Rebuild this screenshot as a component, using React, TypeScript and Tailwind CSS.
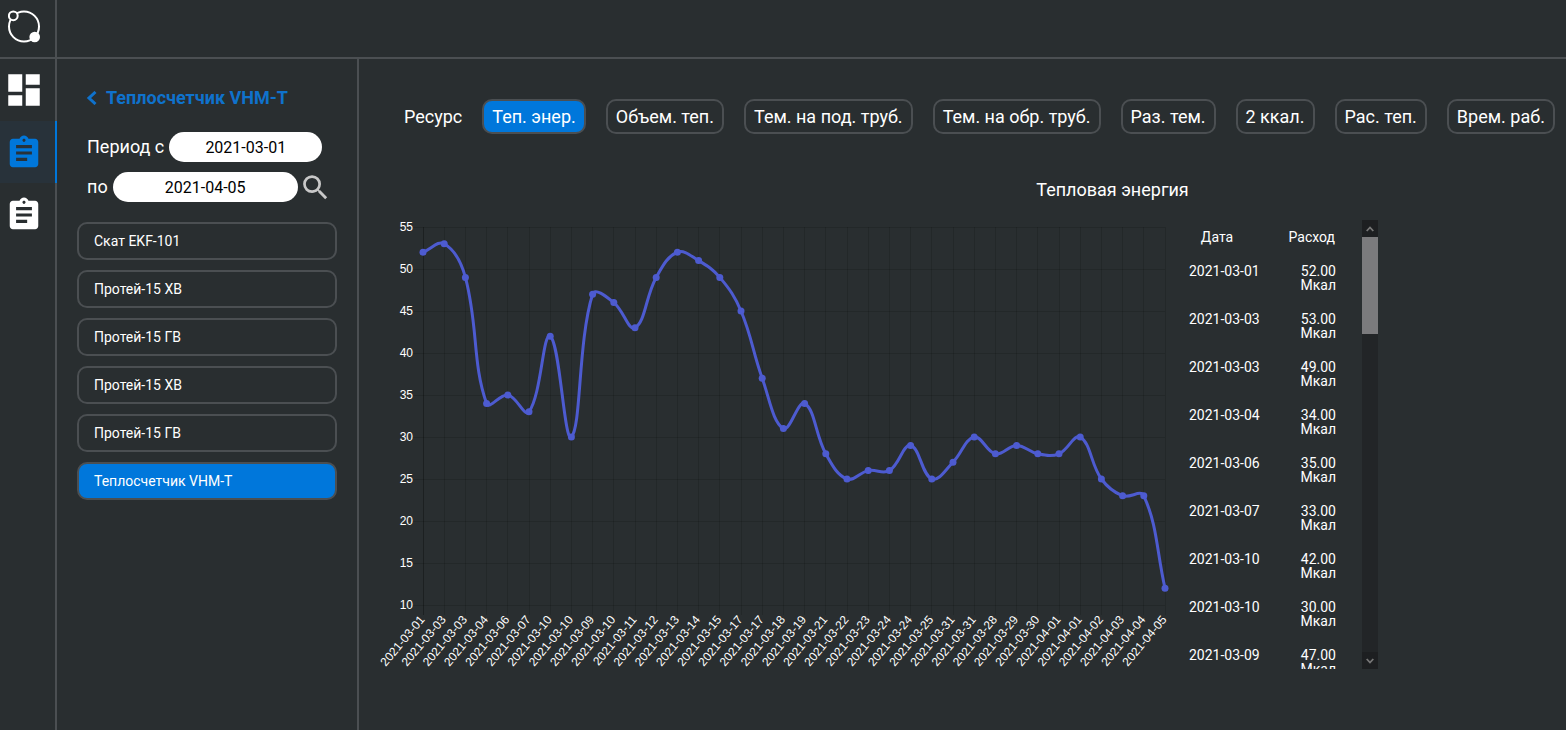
import React, { useRef, useState } from "react";
import { MdDashboard, MdAssignment, MdSearch } from "react-icons/md";

const READINGS: [string, number][] = [
  ["2021-03-01", 52], ["2021-03-03", 53], ["2021-03-03", 49], ["2021-03-04", 34],
  ["2021-03-06", 35], ["2021-03-07", 33], ["2021-03-10", 42], ["2021-03-10", 30],
  ["2021-03-09", 47], ["2021-03-10", 46], ["2021-03-11", 43], ["2021-03-12", 49],
  ["2021-03-13", 52], ["2021-03-14", 51], ["2021-03-15", 49], ["2021-03-17", 45],
  ["2021-03-17", 37], ["2021-03-18", 31], ["2021-03-19", 34], ["2021-03-21", 28],
  ["2021-03-22", 25], ["2021-03-23", 26], ["2021-03-24", 26], ["2021-03-24", 29],
  ["2021-03-25", 25], ["2021-03-31", 27], ["2021-03-31", 30], ["2021-03-28", 28],
  ["2021-03-29", 29], ["2021-03-30", 28], ["2021-04-01", 28], ["2021-04-01", 30],
  ["2021-04-02", 25], ["2021-04-03", 23], ["2021-04-04", 23], ["2021-04-05", 12],
];

const METERS = ["Скат EKF-101", "Протей-15 ХВ", "Протей-15 ГВ", "Протей-15 ХВ", "Протей-15 ГВ", "Теплосчетчик VHM-T"];

const RESOURCES = ["Теп. энер.", "Объем. теп.", "Тем. на под. труб.", "Тем. на обр. труб.", "Раз. тем.", "2 ккал.", "Рас. теп.", "Врем. раб."];

const TICKS = [55, 50, 45, 40, 35, 30, 25, 20, 15, 10];

const LEFT = 44;
const TOP = 7;
const STEP = 21.2;
const UNIT = 8.4;
const BOTTOM = TOP + 45 * UNIT;
const RIGHT = LEFT + 35 * STEP;

const xAt = (i: number) => LEFT + i * STEP;
const yAt = (v: number) => TOP + (55 - v) * UNIT;

// Cubic spline whose control points depend on the distance to both neighbours.
function splinePath(points: { x: number; y: number }[], tension = 0.4) {
  const clamp = (y: number) => Math.min(Math.max(y, TOP), BOTTOM);
  const controls = points.map((p, i) => {
    const prev = points[i - 1] ?? p;
    const next = points[i + 1] ?? p;
    const d0 = Math.hypot(p.x - prev.x, p.y - prev.y);
    const d1 = Math.hypot(next.x - p.x, next.y - p.y);
    const a = (tension * d0) / (d0 + d1);
    const b = (tension * d1) / (d0 + d1);
    return {
      before: { x: p.x - a * (next.x - prev.x), y: clamp(p.y - a * (next.y - prev.y)) },
      after: { x: p.x + b * (next.x - prev.x), y: clamp(p.y + b * (next.y - prev.y)) },
    };
  });
  return points
    .map((p, i) => {
      if (i === 0) return `M${p.x} ${p.y}`;
      const c0 = controls[i - 1].after;
      const c1 = controls[i].before;
      return `C${c0.x} ${c0.y} ${c1.x} ${c1.y} ${p.x} ${p.y}`;
    })
    .join(" ");
}

function Chart() {
  const points = READINGS.map(([, value], i) => ({ x: xAt(i), y: yAt(value) }));
  return (
    <svg viewBox="0 0 797 452" className="block h-auto w-full overflow-visible font-['Liberation_Sans',sans-serif] text-xs" role="img" aria-label="Тепловая энергия">
      <g stroke="#000" strokeOpacity="0.13">
        {TICKS.map((t) => (
          <line key={t} x1={LEFT - 10} x2={RIGHT} y1={Math.round(yAt(t)) + 0.5} y2={Math.round(yAt(t)) + 0.5} />
        ))}
        {points.map((p, i) => (
          <line key={i} x1={Math.floor(p.x) + 0.5} x2={Math.floor(p.x) + 0.5} y1={TOP} y2={BOTTOM + 10} strokeOpacity={i === 0 ? 0.3 : 0.13} />
        ))}
      </g>
      <g fill="#fff" textAnchor="end">
        {TICKS.map((t) => (
          <text key={t} x={LEFT - 10} y={yAt(t) + 4}>{t}</text>
        ))}
        {READINGS.map(([date], i) => (
          <text key={i} transform={`translate(${xAt(i)} ${BOTTOM + 13}) rotate(-50)`} y={3}>{date}</text>
        ))}
      </g>
      <path d={splinePath(points)} fill="none" stroke="#4d5bd0" strokeWidth="3" />
      {points.map((p, i) => (
        <circle key={i} cx={p.x} cy={p.y} r="3.5" fill="#4d5bd0" />
      ))}
    </svg>
  );
}

function ReadingsTable() {
  const list = useRef<HTMLDivElement>(null);
  const [progress, setProgress] = useState(0);
  const onScroll = () => {
    const el = list.current;
    if (el) setProgress(el.scrollTop / (el.scrollHeight - el.clientHeight));
  };
  const scroll = (by: number) => list.current?.scrollBy({ top: by });
  return (
    <div className="flex h-[449px] w-[202px] shrink-0">
      <div ref={list} onScroll={onScroll} className="min-w-0 flex-1 overflow-y-auto [scrollbar-width:none]">
        <table className="w-full table-fixed border-collapse text-sm leading-[14px]">
          <thead>
            <tr className="h-[34px]">
              <th className="w-[94px] p-0 pr-3 text-center font-normal">Дата</th>
              <th className="p-0 pr-[27px] text-right font-normal">Расход</th>
            </tr>
          </thead>
          <tbody>
            {READINGS.map(([date, value], i) => (
              <tr key={i} className="h-12 align-top">
                <td className="pt-[10px] pl-[13px]">{date}</td>
                <td className="pt-[10px] pr-[26px] text-right">
                  {value.toFixed(2)}
                  <br />
                  Мкал
                </td>
              </tr>
            ))}
          </tbody>
        </table>
      </div>
      <div className="flex w-4 flex-col bg-[#222527]">
        <button type="button" aria-label="Вверх" onClick={() => scroll(-48)} className="flex h-[17px] items-center justify-center bg-[#1d1f21]">
          <svg width="8" height="6" viewBox="0 0 8 6"><path d="M0.7 5 4 1.5 7.3 5" fill="none" stroke="#777" strokeWidth="1.8" /></svg>
        </button>
        <div className="relative flex-1">
          <div className="absolute inset-x-0 h-[97px] bg-[#7b7b7d]" style={{ top: progress * 318 }} />
        </div>
        <button type="button" aria-label="Вниз" onClick={() => scroll(48)} className="flex h-[17px] items-center justify-center bg-[#1d1f21]">
          <svg width="8" height="6" viewBox="0 0 8 6"><path d="M0.7 1 4 4.5 7.3 1" fill="none" stroke="#777" strokeWidth="1.8" /></svg>
        </button>
      </div>
    </div>
  );
}

export default function App() {
  const [resource, setResource] = useState(0);
  const [meter, setMeter] = useState(5);
  return (
    <div className="flex min-h-screen flex-col overflow-x-hidden bg-[#292e30] font-[Roboto,sans-serif] text-white">
      <header className="flex h-[59px] shrink-0 border-b-2 border-[#4b4f52]">
        <a href="#" aria-label="Главная" className="flex w-[57px] items-center border-r-2 border-[#4b4f52] pb-1 pl-2">
          <svg width="33" height="33" viewBox="0 0 33 33" fill="none" stroke="#fff">
            <circle cx="16" cy="16.5" r="15" strokeWidth="2" />
            <circle cx="5.3" cy="5.8" r="4.4" fill="#292e30" strokeWidth="2" />
            <circle cx="26.7" cy="27" r="5.3" fill="#fff" stroke="none" />
          </svg>
        </a>
      </header>
      <div className="flex flex-1">
        <nav className="flex w-[57px] shrink-0 flex-col border-r-2 border-[#4b4f52]">
          <a href="#dashboard" aria-label="Панель" className="flex h-[62px] items-center pl-[3px]"><MdDashboard size={42} /></a>
          <a href="#readings" aria-label="Показания" className="-mr-0.5 flex h-[62px] items-center border-r-2 border-[#0077db] bg-[#28323a] pt-0.5 pl-[5px] text-[#0077db]"><MdAssignment size={38} /></a>
          <a href="#reports" aria-label="Отчёты" className="flex h-[62px] items-center pt-0.5 pl-[5px]"><MdAssignment size={38} /></a>
        </nav>
        <aside className="w-[302px] shrink-0 border-r-2 border-[#4b4f52] px-5 pt-[27px]">
          <a href="#meters" className="flex h-6 items-center gap-[9px] pl-[9px] text-lg font-bold text-[#0f72cc]">
            <svg width="11" height="14" viewBox="0 0 11 14"><path d="M9.5 1 3 7 9.5 13" fill="none" stroke="currentColor" strokeWidth="3" /></svg>
            Теплосчетчик VHM-T
          </a>
          <form className="mt-[22px] flex flex-col gap-[10px] pl-[10px] text-lg" onSubmit={(e) => e.preventDefault()}>
            <div className="flex h-[30px] items-center gap-[5px]">
              <label htmlFor="from">Период с</label>
              <input id="from" defaultValue="2021-03-01" className="h-[30px] w-[153px] rounded-full bg-white text-center text-base text-black" />
            </div>
            <div className="flex h-[30px] items-center gap-[5px]">
              <label htmlFor="to">по</label>
              <input id="to" defaultValue="2021-04-05" className="h-[30px] w-[185px] rounded-full bg-white text-center text-base text-black" />
              <button type="submit" aria-label="Найти" className="-ml-1 shrink-0 text-[#c8c8c8]"><MdSearch size={33} /></button>
            </div>
          </form>
          <div className="mt-5 flex flex-col gap-[10px] pb-5">
            {METERS.map((name, i) => (
              <button key={i} type="button" onClick={() => setMeter(i)} className={`h-[38px] w-full rounded-[10px] border-2 border-[#4b4f52] px-[15px] text-left text-sm ${i === meter ? "bg-[#0077db]" : ""}`}>
                {name}
              </button>
            ))}
          </div>
        </aside>
        <main className="min-w-0 flex-1 pt-10">
          <div className="flex items-center gap-5 pl-[45px] text-lg whitespace-nowrap">
            <span>Ресурс</span>
            {RESOURCES.map((name, i) => (
              <button key={name} type="button" onClick={() => setResource(i)} className={`h-[35px] shrink-0 rounded-[10px] border-2 border-[#4b4f52] px-2 ${i === resource ? "bg-[#0077db]" : ""}`}>
                {name}
              </button>
            ))}
          </div>
          <h1 className="mt-[42px] pl-[300px] text-center text-lg">Тепловая энергия</h1>
          <div className="mt-[16px] flex items-start pr-[188px] pl-5">
            <div className="min-w-0 flex-1"><Chart /></div>
            <ReadingsTable />
          </div>
        </main>
      </div>
    </div>
  );
}
